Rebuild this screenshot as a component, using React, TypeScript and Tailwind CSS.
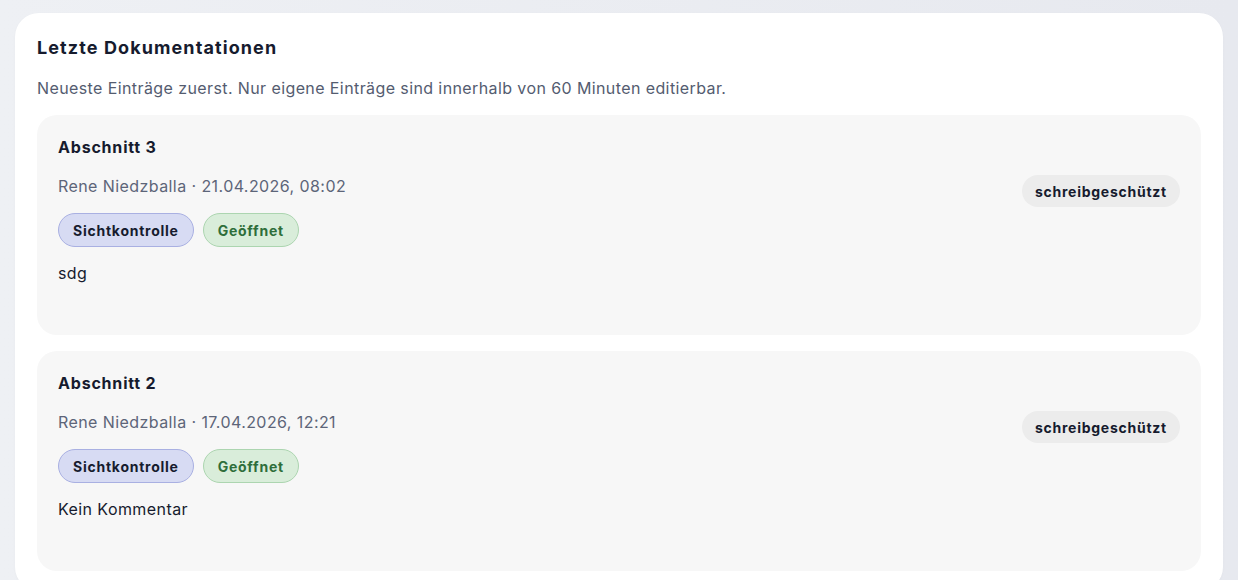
import React from "react";

type Entry = { title: string; meta: string; comment: string };

const entries: Entry[] = [
  { title: "Abschnitt 3", meta: "Rene Niedzballa · 21.04.2026, 08:02", comment: "sdg" },
  { title: "Abschnitt 2", meta: "Rene Niedzballa · 17.04.2026, 12:21", comment: "Kein Kommentar" },
];

function EntryCard({ e }: { e: Entry }) {
  return (
    <div className="rounded-[20px] bg-[#f7f7f7] px-[21px] pt-[20px] pb-[50px] flex flex-col gap-[14px]">
      <div className="flex items-center justify-between">
        <div className="flex flex-col">
          <div className="text-[16px] leading-[24px] font-bold tracking-[0.8px] text-[#161b2e]">{e.title}</div>
          <div className="mt-[15px] text-[16px] leading-[24px] tracking-[0.42px] text-[#5d6579]">{e.meta}</div>
          <div className="mt-[15px] flex gap-[9px]">
            <span className="h-[34px] px-[14px] flex items-center rounded-full border border-[#a9b0e2] bg-[#d7dbf3] text-[14px] font-bold tracking-[0.75px] text-[#161b2e]">
              Sichtkontrolle
            </span>
            <span className="h-[34px] px-[14px] flex items-center rounded-full border border-[#acd5b0] bg-[#d9edda] text-[14px] font-bold tracking-[0.75px] text-[#2f6e3a]">
              Geöffnet
            </span>
          </div>
        </div>
        <span className="h-[32px] px-[13px] flex items-center rounded-full bg-[#ececec] text-[14px] font-bold tracking-[0.75px] text-[#161b2e]">
          schreibgeschützt
        </span>
      </div>
      <div className="text-[16px] leading-[24px] tracking-[0.42px] text-[#161b2e]">{e.comment}</div>
    </div>
  );
}

export default function App() {
  return (
    <div
      className="min-h-[580px] bg-gradient-to-r from-[#eef0f4] to-[#e7e9ef] px-[15px] pt-[13px]"
      style={{ fontFamily: "Inter, 'Noto Sans', sans-serif" }}
    >
      <div className="rounded-[24px] bg-white px-[22px] pt-[22px] pb-[20px] shadow-[0_1px_3px_rgba(0,0,0,0.03)]">
        <h2 className="text-[18px] leading-[26px] font-bold tracking-[1.1px] text-[#161b2e]">Letzte Dokumentationen</h2>
        <p className="mt-[15px] text-[16px] leading-[24px] tracking-[0.4px] text-[#545c70]">
          Neueste Einträge zuerst. Nur eigene Einträge sind innerhalb von 60 Minuten editierbar.
        </p>
        <div className="mt-[15px] flex flex-col gap-[16px]">
          {entries.map((e) => (
            <EntryCard key={e.title} e={e} />
          ))}
        </div>
      </div>
    </div>
  );
}
